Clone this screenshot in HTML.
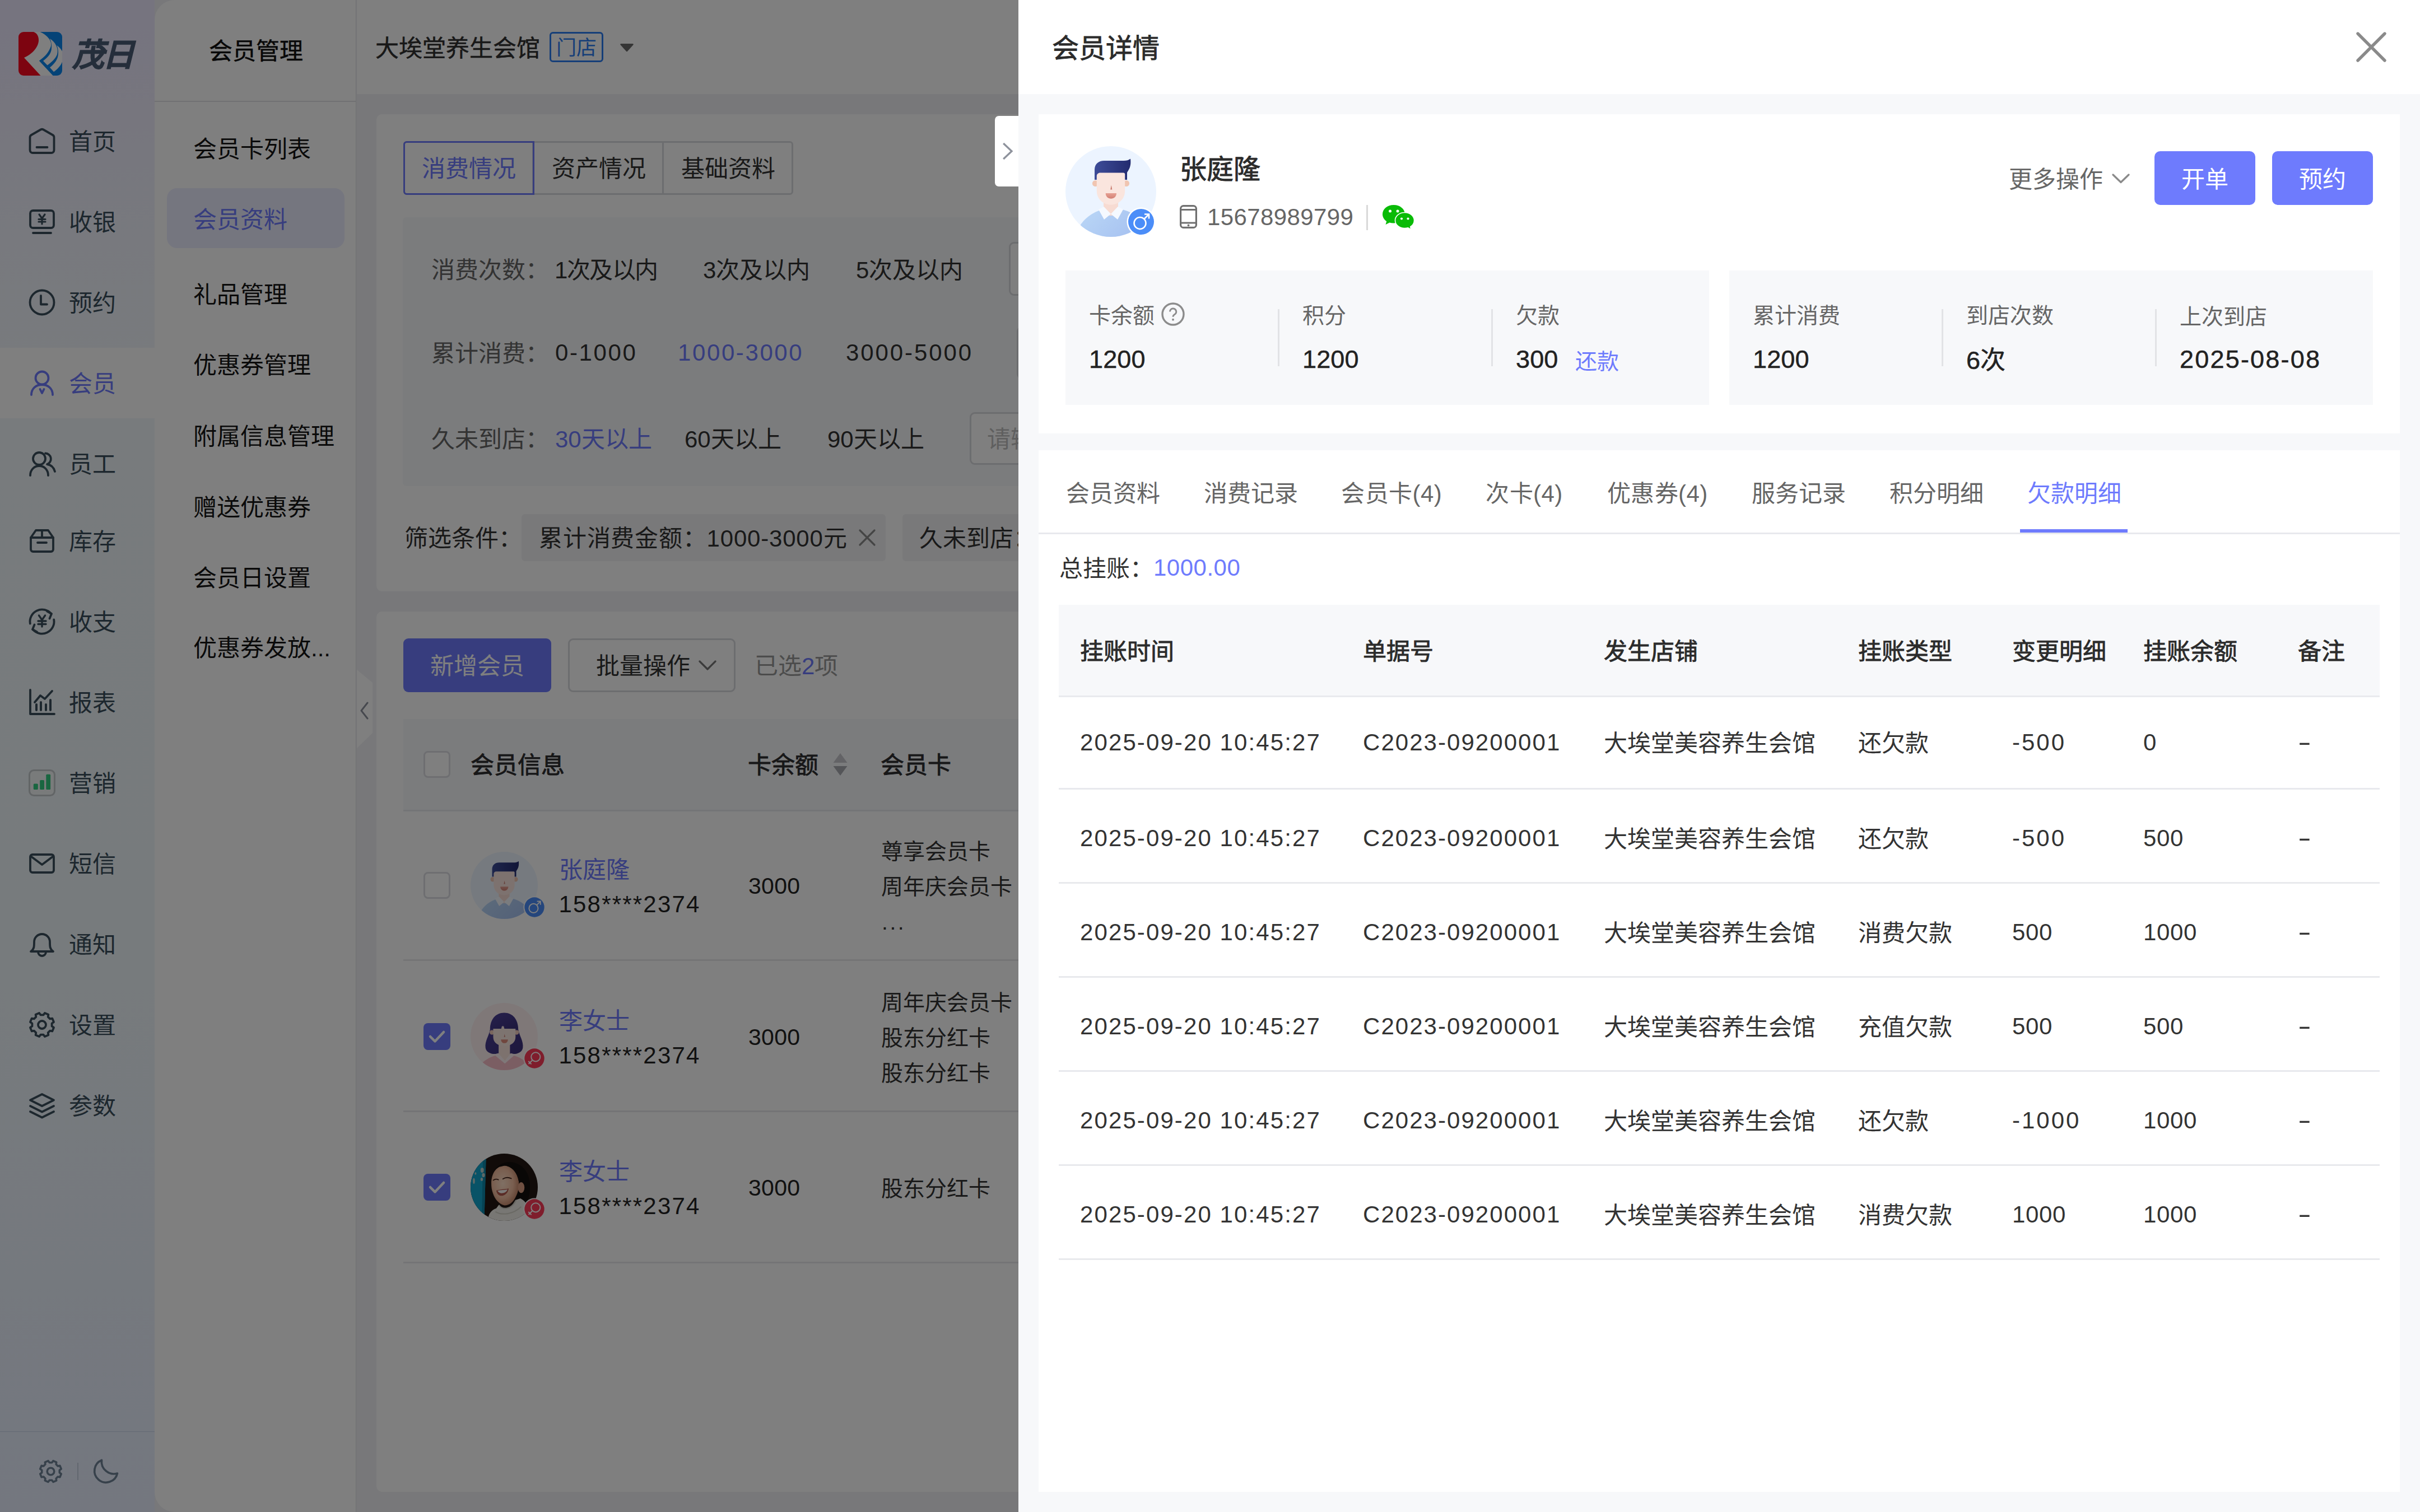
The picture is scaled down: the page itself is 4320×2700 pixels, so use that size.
<!DOCTYPE html>
<html lang="zh-CN"><head><meta charset="utf-8"><title>会员详情</title>
<style>
*{box-sizing:border-box;margin:0;padding:0}
html,body{width:4320px;height:2700px;overflow:hidden;background:#fff}
body{font-family:"Liberation Sans",sans-serif;color:#333;-webkit-font-smoothing:antialiased}
#app{position:relative;width:4320px;height:2700px;overflow:hidden;background:#f0f1f5}
.t{position:absolute;white-space:nowrap}
.b{position:absolute}
.m{-webkit-text-stroke:0.5px currentColor}
.m2{-webkit-text-stroke:0.85px currentColor}
svg{position:absolute;overflow:visible}
.ic{fill:none;stroke:#3a4f5c;stroke-width:3.800;stroke-linecap:round;stroke-linejoin:round}
</style></head>
<body>
<svg width="0" height="0" style="position:absolute"><defs>
<clipPath id="c81"><circle cx="81" cy="81" r="81"/></clipPath>
<linearGradient id="hairm" x1="0" y1="0" x2="1" y2="0"><stop offset="0" stop-color="#3d4c98"/><stop offset="1" stop-color="#232b6f"/></linearGradient>
<linearGradient id="bodym" x1="0" y1="0" x2="1" y2="1"><stop offset="0" stop-color="#bcd9f7"/><stop offset="1" stop-color="#97b1ec"/></linearGradient>
<linearGradient id="mouth" x1="0" y1="0" x2="0" y2="1"><stop offset="0" stop-color="#e6a093"/><stop offset="1" stop-color="#d27f73"/></linearGradient>
<g id="av_m"><g clip-path="url(#c81)">
<rect width="162" height="162" fill="#ecf4ff"/>
<ellipse cx="84" cy="175" rx="68" ry="64" fill="url(#bodym)"/>
<rect x="68" y="92" width="26" height="32" fill="#f7dbd2"/>
<path d="M59 113L68.500 108 81 121 69 131Z" fill="#f5f9ff"/><path d="M103 113L93.500 108 81 121 93 131Z" fill="#f5f9ff"/>
<circle cx="53.500" cy="66.500" r="5.600" fill="#f0c5b1"/><circle cx="108.500" cy="66.500" r="5.600" fill="#f0c5b1"/>
<path d="M55.800 44H106.200V80C106.200 94 95 104.500 81 104.500S55.800 94 55.800 80Z" fill="#fae5de"/>
<path d="M52 60V42C52 32 59 26 69 26H104C109 26 113 25 116 22.500C117 30 116 37 113 42L110 47V60H106.200V50C106.200 48.500 105 47.600 103.500 47.600H62C58.500 47.600 55.800 50 55.800 53.500V60Z" fill="url(#hairm)"/>
<path d="M81.800 69.500L83.300 77.500H80.200Z" fill="#c97d70"/>
<path d="M71.700 84H91C91 90 86.500 93.800 81.300 93.800S71.700 90 71.700 84Z" fill="url(#mouth)"/>
</g></g>
<linearGradient id="hairf" x1="0" y1="0" x2="1" y2="1"><stop offset="0" stop-color="#4d4199"/><stop offset="1" stop-color="#3a2f7a"/></linearGradient>
<g id="av_f"><g clip-path="url(#c81)">
<rect width="162" height="162" fill="#fff0f1"/>
<path d="M47 64C47 40 60 23.500 81 23.500S115 40 115 64C118 80 128 92 126 108C125 116 118 121 108 123H54C44 121 37 116 36 108C34 92 44 80 47 64Z" fill="url(#hairf)"/>
<ellipse cx="82" cy="176" rx="68" ry="52" fill="#f7bcc7"/>
<path d="M67.700 96H95V122L100 127 82 143 64 127 67.700 122Z" fill="#fae4dd"/>
<path d="M56 124L67 121 82.700 139 97 121 108 124 82.700 146Z" fill="#fef1f2"/>
<circle cx="51.500" cy="71" r="5.500" fill="#f3cdbd"/><circle cx="111" cy="71" r="5.500" fill="#f3cdbd"/>
<path d="M54.600 56H108.400V82C108.400 96 96 104 81.500 104S54.600 96 54.600 82Z" fill="#fbe8e1"/>
<path d="M48 62C48 40 62 28 81 28S114 40 114 62L81.500 62 77.700 47.700 74 62Z" fill="url(#hairf)"/>
<path d="M82 75L83.500 82H80.600Z" fill="#c97d70"/>
<path d="M73.400 88H90C90 94 86 97 81.700 97S73.400 94 73.400 88Z" fill="#e08c7c"/>
</g></g>
<radialGradient id="facep" cx="0.42" cy="0.45" r="0.62"><stop offset="0" stop-color="#ffe0c8"/><stop offset="0.6" stop-color="#f3bd9f"/><stop offset="1" stop-color="#c08062"/></radialGradient>
<g id="av_p"><g clip-path="url(#c81)">
<rect width="162" height="162" fill="#221712"/>
<path d="M0 0H37.500L33 162H0Z" fill="#13a6cf"/>
<path d="M30 0H37.500L33 162H27Z" fill="#0c86a8"/>
<g fill="#dcdbd0" opacity=".85"><ellipse cx="28" cy="40" rx="4" ry="6"/><ellipse cx="31" cy="52" rx="3.500" ry="5"/><ellipse cx="27" cy="62" rx="3" ry="4"/><ellipse cx="8" cy="66" rx="2.500" ry="7"/><ellipse cx="12" cy="48" rx="2" ry="3"/></g>
<path d="M52 66C50 36 76 14 106 22C134 30 148 58 142 96C140 112 134 122 126 128L98 104Z" fill="#130e0c"/>
<path d="M50 72C50 50 60 30 82 29C98 30 112 44 116 66C118 80 114 94 110 102C104 116 94 125 82 125C70 123 58 110 54 96C51 88 50 80 50 72Z" fill="url(#facep)"/>
<path d="M82 29C98 30 112 44 116 66L119 70C122 50 110 30 92 24C84 22 76 26 70 32Z" fill="#130e0c"/>
<ellipse cx="122" cy="82" rx="8" ry="13" fill="#dfa084"/>
<path d="M55 64c4-3 8-3 12-1M78 61c6-4 14-4 20-1" stroke="#4a2a20" stroke-width="2.600" fill="none" stroke-linecap="round"/>
<path d="M62 89C70 86 84 86 92 84C90 98 78 104 70 101C66 99 63 95 62 89Z" fill="#b4584c"/>
<path d="M65 89.500C72 88 82 88 89 86.500C87 93 80 96 74 95.500C70 95 67 93 65 89.500Z" fill="#fbf7f2"/>
<path d="M42 162C42 146 50 136 62 132L68 124C76 136 96 136 108 112L120 108C128 112 134 118 136 126L150 162Z" fill="#f0efe9"/>
<path d="M68 124C78 138 100 134 110 112M60 140C76 150 104 146 122 128" stroke="#d5d3c9" stroke-width="3" fill="none"/>
</g></g>
<g id="bd_m"><circle cx="26" cy="26" r="25.500" fill="#fff"/><circle cx="26" cy="26" r="23" fill="#4b8df8"/>
<circle cx="24" cy="28.500" r="10.500" fill="none" stroke="#fff" stroke-width="2.600"/><path d="M31.500 21L40 12.500M32 12.500H40V20.500" fill="none" stroke="#fff" stroke-width="2.600"/></g>
<g id="bd_f"><circle cx="26" cy="26" r="25.500" fill="#fff"/><circle cx="26" cy="26" r="23" fill="#ff3a58"/>
<circle cx="29" cy="22.500" r="10.500" fill="none" stroke="#fff" stroke-width="2.600"/><path d="M21.500 30L12.500 39M12 32.500L19 39.500" fill="none" stroke="#fff" stroke-width="2.600"/></g>
</defs></svg>
<div id="app">
<div class="b" id="side" style="left:0;top:0;width:276px;height:2700px;background:linear-gradient(180deg,#ece8ff 0%,#eeecfd 7%,#f0f3fc 16%,#f0f7fb 28%,#eff7fa 60%,#ebf2fd 85%,#e8efff 100%)"></div>
<div class="b " style="left:0px;top:621px;width:276px;height:126px;background:rgba(255,255,255,.96)"></div>
<svg style="left:33px;top:57px" width="78" height="78" viewBox="0 0 78 78">
<defs><clipPath id="lg"><rect x="0" y="0" width="78" height="78" rx="9" ry="9"/></clipPath></defs>
<g clip-path="url(#lg)">
<rect width="78" height="78" fill="#ffffff"/>
<path d="M0 0H27C33 2 36.5 8 36 16C35 28 24 40 10 46L39.5 78H0Z" fill="#fa0820"/>
<path d="M38.5 0H78V78H61.5L36.8 51.5C48 44 55 35 58 25C60 15 50 5 38.5 0Z" fill="#0b86ee"/>
<path d="M56 12C66 18 72 30 69 40C66 48 59 54 51.5 59.5L44 51.7C52 46 57 40 58.5 33C60 26 59 18 56 12Z" fill="#ffffff"/>
<path d="M68.5 24C73 27 76 31 78.5 35.5V52C76 60 70 66 63 71.2L56 63.5C63 58 68 52 70 45C72 38 71 30 68.5 24Z" fill="#ffffff"/>
</g></svg>
<div class="t " style="left:129px;top:70.2px;font-size:57px;line-height:57px;color:#4a5c76;font-weight:bold;font-style:italic;letter-spacing:-3px;-webkit-text-stroke:1.2px currentColor">茂日</div>
<svg class="ic" style="left:51px;top:228px;stroke:#3a4f5c" width="48" height="48" viewBox="0 0 48 48"><path d="M21.500 3.500a5 5 0 0 1 5 0L43 13a5 5 0 0 1 2.500 4.300V40a5 5 0 0 1-5 5H7.500a5 5 0 0 1-5-5V17.300A5 5 0 0 1 5 13Z"/><path d="M14.500 35H33.500"/></svg>
<div class="t " style="left:123px;top:233.0px;font-size:42px;line-height:42px;color:#3a4f5c;">首页</div>
<svg class="ic" style="left:51px;top:372px;stroke:#3a4f5c" width="48" height="48" viewBox="0 0 48 48"><rect x="3" y="4" width="42" height="31" rx="5"/><path d="M8 44H40"/><path d="M19 11l5 7 5-7M24 18v10M18 19.5h12M18 24h12" stroke-width="3.2"/></svg>
<div class="t " style="left:123px;top:377.0px;font-size:42px;line-height:42px;color:#3a4f5c;">收银</div>
<svg class="ic" style="left:51px;top:516px;stroke:#3a4f5c" width="48" height="48" viewBox="0 0 48 48"><circle cx="24" cy="24" r="21.500"/><path d="M22 12V27.500H33"/></svg>
<div class="t " style="left:123px;top:521.0px;font-size:42px;line-height:42px;color:#3a4f5c;">预约</div>
<svg class="ic" style="left:51px;top:660px;stroke:#6e7bfd" width="48" height="48" viewBox="0 0 48 48"><circle cx="24" cy="15" r="11.5"/><path d="M5 45c0-11 8-18 19-18s19 7 19 18"/><path d="M20.5 35l3.5 7 3.5-7"/></svg>
<div class="t " style="left:123px;top:665.0px;font-size:42px;line-height:42px;color:#6e7bfd;">会员</div>
<svg class="ic" style="left:51px;top:804px;stroke:#3a4f5c" width="48" height="48" viewBox="0 0 48 48"><circle cx="19" cy="15" r="11"/><path d="M3 45c0-10 7-17 16-17s16 7 16 17"/><path d="M30 5.5a10 10 0 0 1 3 19.5c7 1 12 6 14 13"/></svg>
<div class="t " style="left:123px;top:809.0px;font-size:42px;line-height:42px;color:#3a4f5c;">员工</div>
<svg class="ic" style="left:51px;top:942px;stroke:#3a4f5c" width="48" height="48" viewBox="0 0 48 48"><path d="M4 18L13 5H35L44 18V39a4 4 0 0 1-4 4H8a4 4 0 0 1-4-4Z"/><path d="M4 18H44M24 5V18M16 27H32"/></svg>
<div class="t " style="left:123px;top:947.0px;font-size:42px;line-height:42px;color:#3a4f5c;">库存</div>
<svg class="ic" style="left:51px;top:1086px;stroke:#3a4f5c" width="48" height="48" viewBox="0 0 48 48"><path d="M2.800 27.700A21.500 21.500 0 0 1 40.500 10.200"/><path d="M45.200 20.300A21.500 21.500 0 0 1 7.500 37.800"/><path d="M33 5.500l8 4.500-3.500 8.500"/><path d="M15 42.500l-8-4.500 3.500-8.500"/><path d="M18.500 13l5.500 8 5.500-8M24 21v12M17 23h14M17 28.500h14" stroke-width="3.4"/></svg>
<div class="t " style="left:123px;top:1091.0px;font-size:42px;line-height:42px;color:#3a4f5c;">收支</div>
<svg class="ic" style="left:51px;top:1230px;stroke:#3a4f5c" width="48" height="48" viewBox="0 0 48 48"><path d="M3 2V45H46"/><path d="M11 24l10-12 8 6 13-14"/><path d="M14 28v10M22 24v14M31 28v10M39 20v18" stroke-width="4"/></svg>
<div class="t " style="left:123px;top:1235.0px;font-size:42px;line-height:42px;color:#3a4f5c;">报表</div>
<svg style="left:51px;top:1374px" width="48" height="48" viewBox="0 0 48 48"><rect x="1.500" y="1.500" width="45" height="45" rx="8" fill="#f3f6f7" stroke="#c4cacd" stroke-width="3"/><rect x="8.800" y="25.400" width="8" height="10.600" rx="1.500" fill="#32cc80"/><rect x="20.200" y="19" width="7.800" height="17" rx="1.500" fill="#32cc80"/><rect x="31.300" y="8.800" width="7.800" height="27.200" rx="1.500" fill="#32cc80"/></svg>
<div class="t " style="left:123px;top:1379.0px;font-size:42px;line-height:42px;color:#3a4f5c;">营销</div>
<svg class="ic" style="left:51px;top:1518px;stroke:#3a4f5c" width="48" height="48" viewBox="0 0 48 48"><rect x="3" y="8" width="42" height="32" rx="4"/><path d="M4 11l20 15 20-15"/></svg>
<div class="t " style="left:123px;top:1523.0px;font-size:42px;line-height:42px;color:#3a4f5c;">短信</div>
<svg class="ic" style="left:51px;top:1662px;stroke:#3a4f5c" width="48" height="48" viewBox="0 0 48 48"><path d="M4 37c6-4 6-9 6-17a14 14 0 0 1 28 0c0 8 0 13 6 17Z"/><path d="M17 38a7 7 0 0 0 14 0"/></svg>
<div class="t " style="left:123px;top:1667.0px;font-size:42px;line-height:42px;color:#3a4f5c;">通知</div>
<svg class="ic" style="left:51px;top:1806px;stroke:#3a4f5c" width="48" height="48" viewBox="0 0 48 48"><circle cx="24" cy="24" r="7"/><path d="M26.5 6.4L28.9 3.0L35.4 5.7L34.7 9.8L38.2 13.3L42.3 12.6L45.0 19.1L41.6 21.5L41.6 26.5L45.0 28.9L42.3 35.4L38.2 34.7L34.7 38.2L35.4 42.3L28.9 45.0L26.5 41.6L21.5 41.6L19.1 45.0L12.6 42.3L13.3 38.2L9.8 34.7L5.7 35.4L3.0 28.9L6.4 26.5L6.4 21.5L3.0 19.1L5.7 12.6L9.8 13.3L13.3 9.8L12.6 5.7L19.1 3.0L21.5 6.4Z"/></svg>
<div class="t " style="left:123px;top:1811.0px;font-size:42px;line-height:42px;color:#3a4f5c;">设置</div>
<svg class="ic" style="left:51px;top:1950px;stroke:#3a4f5c" width="48" height="48" viewBox="0 0 48 48"><path d="M24 4L45 14.500 24 25 3 14.500Z"/><path d="M3 25l21 10.500L45 25"/><path d="M3 35l21 10.500L45 35"/></svg>
<div class="t " style="left:123px;top:1955.0px;font-size:42px;line-height:42px;color:#3a4f5c;">参数</div>
<div class="b " style="left:0px;top:2555.5px;width:276px;height:1.5px;background:#c9d3e6"></div>
<svg class="ic" style="left:68.500px;top:2605.500px;stroke:#6f8396;stroke-width:4" width="43" height="43" viewBox="0 0 48 48"><circle cx="24" cy="24" r="7"/><path d="M26.5 6.4L28.9 3.0L35.4 5.7L34.7 9.8L38.2 13.3L42.3 12.6L45.0 19.1L41.6 21.5L41.6 26.5L45.0 28.9L42.3 35.4L38.2 34.7L34.7 38.2L35.4 42.3L28.9 45.0L26.5 41.6L21.5 41.6L19.1 45.0L12.6 42.3L13.3 38.2L9.8 34.7L5.7 35.4L3.0 28.9L6.4 26.5L6.4 21.5L3.0 19.1L5.7 12.6L9.8 13.3L13.3 9.8L12.6 5.7L19.1 3.0L21.5 6.4Z"/></svg>
<div class="b " style="left:138px;top:2612px;width:1.5px;height:31px;background:#c4cede"></div>
<svg class="ic" style="left:167px;top:2605px;stroke:#6f8396;stroke-width:4" width="44" height="44" viewBox="0 0 48 48"><path d="M15.800 2.700A24 24 0 0 0 46.300 28.400 22.500 22.500 0 1 1 15.800 2.700Z"/></svg>
<div class="b " style="left:276px;top:0px;width:4044px;height:2700px;background:#f0f1f5;border-radius:36px 0 0 36px;overflow:hidden"></div>
<div class="b " style="left:276px;top:0px;width:360px;height:2700px;background:#fff;border-radius:36px 0 0 36px"></div>
<div class="b " style="left:635px;top:0px;width:1.2px;height:2700px;background:#dfe0e3"></div>
<div class="b " style="left:276px;top:180px;width:359px;height:2px;background:#e2e3e6"></div>
<div class="t m" style="left:277px;top:70.7px;font-size:42px;line-height:42px;color:#111;width:359px;text-align:center;">会员管理</div>
<div class="b " style="left:298px;top:336px;width:317px;height:107px;background:#ebecff;border-radius:18px"></div>
<div class="t " style="left:345px;top:246.0px;font-size:42px;line-height:42px;color:#141414;">会员卡列表</div>
<div class="t " style="left:345px;top:371.5px;font-size:42px;line-height:42px;color:#6e7bfd;">会员资料</div>
<div class="t " style="left:345px;top:506.0px;font-size:42px;line-height:42px;color:#141414;">礼品管理</div>
<div class="t " style="left:345px;top:632.0px;font-size:42px;line-height:42px;color:#141414;">优惠券管理</div>
<div class="t " style="left:345px;top:759.0px;font-size:42px;line-height:42px;color:#141414;">附属信息管理</div>
<div class="t " style="left:345px;top:885.5px;font-size:42px;line-height:42px;color:#141414;">赠送优惠券</div>
<div class="t " style="left:345px;top:1011.5px;font-size:42px;line-height:42px;color:#141414;">会员日设置</div>
<div class="t " style="left:345px;top:1137.0px;font-size:42px;line-height:42px;color:#141414;">优惠券发放...</div>
<svg style="left:637px;top:1196px" width="30" height="140" viewBox="0 0 30 140"><path d="M0 0L28 23V113L0 140Z" fill="#fff"/><path d="M19 59L8 73 19 87" fill="none" stroke="#8c919c" stroke-width="3" stroke-linecap="round" stroke-linejoin="round"/></svg>
<div class="b " style="left:637px;top:0px;width:3683px;height:168px;background:#fff"></div>
<div class="t m" style="left:670px;top:66.0px;font-size:42px;line-height:42px;color:#303030;">大埃堂养生会馆</div>
<div class="b " style="left:981px;top:57px;width:96px;height:54px;border:3px solid #2b7cf0;border-radius:6px"></div>
<div class="t " style="left:981px;top:67.7px;font-size:36px;line-height:36px;color:#2b7cf0;width:96px;text-align:center;">门店</div>
<svg style="left:1107px;top:78px" width="24" height="14.500" viewBox="0 0 26 16"><path d="M1.500 0H24.500a1.500 1.500 0 0 1 1 2.600L14 15.300a1.500 1.500 0 0 1-2 0L.5 2.600A1.500 1.500 0 0 1 1.500 0Z" fill="#6a6a6a"/></svg>
<div class="b " style="left:672px;top:204px;width:3700px;height:852px;background:#fff;border-radius:10px"></div>
<div class="b " style="left:720px;top:252px;width:696px;height:96px;border:3px solid #d9dadf;border-radius:6px"></div>
<div class="b " style="left:950px;top:252px;width:3px;height:96px;background:#d9dadf"></div>
<div class="b " style="left:1182px;top:252px;width:3px;height:96px;background:#d9dadf"></div>
<div class="b " style="left:720px;top:252px;width:234px;height:96px;border:3px solid #6e7bfd;border-radius:6px 0 0 6px"></div>
<div class="t " style="left:720px;top:281.0px;font-size:42px;line-height:42px;color:#6e7bfd;width:234px;text-align:center;">消费情况</div>
<div class="t " style="left:953px;top:281.0px;font-size:42px;line-height:42px;color:#333;width:231px;text-align:center;">资产情况</div>
<div class="t " style="left:1184px;top:281.0px;font-size:42px;line-height:42px;color:#333;width:231px;text-align:center;">基础资料</div>
<div class="b " style="left:719px;top:388px;width:3600px;height:480px;background:#f7f8fa;border-radius:6px"></div>
<div class="t " style="left:770px;top:462.0px;font-size:42px;line-height:42px;color:#666;">消费次数：</div>
<div class="t " style="left:990px;top:462.0px;font-size:42px;line-height:42px;color:#333;letter-spacing:-1.500px">1次及以内</div>
<div class="t " style="left:1255px;top:462.0px;font-size:42px;line-height:42px;color:#333;">3次及以内</div>
<div class="t " style="left:1528px;top:462.0px;font-size:42px;line-height:42px;color:#333;">5次及以内</div>
<div class="b " style="left:1801px;top:432px;width:400px;height:96px;border:3px solid #d9dadf;border-radius:9px;background:#fff"></div>
<div class="t " style="left:770px;top:611.0px;font-size:42px;line-height:42px;color:#666;">累计消费：</div>
<div class="t " style="left:991px;top:609.0px;font-size:42px;line-height:42px;color:#333;letter-spacing:2.600px">0-1000</div>
<div class="t " style="left:1210px;top:609.0px;font-size:42px;line-height:42px;color:#6e7bfd;letter-spacing:2.600px">1000-3000</div>
<div class="t " style="left:1510px;top:609.0px;font-size:42px;line-height:42px;color:#333;letter-spacing:2.900px">3000-5000</div>
<div class="b " style="left:1815px;top:583px;width:400px;height:94px;border:3px solid #d9dadf;border-radius:9px;background:#fff"></div>
<div class="t " style="left:770px;top:764.0px;font-size:42px;line-height:42px;color:#666;">久未到店：</div>
<div class="t " style="left:991px;top:764.0px;font-size:42px;line-height:42px;color:#6e7bfd;">30天以上</div>
<div class="t " style="left:1222px;top:764.0px;font-size:42px;line-height:42px;color:#333;">60天以上</div>
<div class="t " style="left:1477px;top:764.0px;font-size:42px;line-height:42px;color:#333;">90天以上</div>
<div class="b " style="left:1731px;top:736px;width:500px;height:94px;border:3px solid #d9dadf;border-radius:9px;background:#fff"></div>
<div class="t " style="left:1762px;top:764.0px;font-size:42px;line-height:42px;color:#bfbfbf;">请输入</div>
<div class="t " style="left:722px;top:941.0px;font-size:42px;line-height:42px;color:#333;">筛选条件：</div>
<div class="b " style="left:931px;top:918px;width:650px;height:84px;background:#f2f3f5;border-radius:6px"></div>
<div class="t " style="left:962px;top:941.0px;font-size:42px;line-height:42px;color:#333;letter-spacing:.8px">累计消费金额：1000-3000元</div>
<svg style="left:1533px;top:945px" width="30" height="30" viewBox="0 0 30 30"><path d="M2 2L28 28M28 2L2 28" stroke="#8a8a8a" stroke-width="3.300" stroke-linecap="round"/></svg>
<div class="b " style="left:1611px;top:918px;width:600px;height:84px;background:#f2f3f5;border-radius:6px"></div>
<div class="t " style="left:1641px;top:941.0px;font-size:42px;line-height:42px;color:#333;">久未到店：30天以上</div>
<div class="b " style="left:672px;top:1092px;width:3700px;height:1572px;background:#fff;border-radius:10px"></div>
<div class="b " style="left:720px;top:1140px;width:264px;height:96px;background:#6e7bfd;border-radius:9px"></div>
<div class="t " style="left:720px;top:1169.0px;font-size:42px;line-height:42px;color:#fff;width:264px;text-align:center;">新增会员</div>
<div class="b " style="left:1014px;top:1140px;width:299px;height:96px;border:3px solid #d9dadf;border-radius:9px"></div>
<div class="t " style="left:1064px;top:1169.0px;font-size:42px;line-height:42px;color:#333;">批量操作</div>
<svg style="left:1247px;top:1178px" width="32" height="20" viewBox="0 0 32 20"><path d="M2 3L16 17 30 3" fill="none" stroke="#777" stroke-width="3.300" stroke-linecap="round" stroke-linejoin="round"/></svg>
<div class="t " style="left:1347px;top:1169.0px;font-size:42px;line-height:42px;color:#999;">已选<span style="color:#6e7bfd">2</span>项</div>
<div class="b " style="left:720px;top:1284px;width:3600px;height:165px;background:#f7f8fa;border-bottom:3px solid #e9eaee"></div>
<div class="b " style="left:756px;top:1341px;width:48px;height:48px;border:3px solid #dcdde3;border-radius:8px;background:#fff"></div>
<div class="t m2" style="left:840px;top:1346.0px;font-size:42px;line-height:42px;color:#2e2e30;">会员信息</div>
<div class="t m2" style="left:1335px;top:1346.0px;font-size:42px;line-height:42px;color:#2e2e30;">卡余额</div>
<svg style="left:1487px;top:1345px" width="26" height="40" viewBox="0 0 26 40"><path d="M13 0L25.500 17H.5Z" fill="#c6c7cc"/><path d="M13 40L25.500 23H.5Z" fill="#a8aab0"/></svg>
<div class="t m2" style="left:1572px;top:1346.0px;font-size:42px;line-height:42px;color:#2e2e30;">会员卡</div>
<div class="b " style="left:756px;top:1557px;width:48px;height:48px;border:3px solid #dcdde3;border-radius:8px;background:#fff"></div>
<svg style="left:840px;top:1521px" width="120" height="120" viewBox="0 0 162 162"><use href="#av_m"/></svg>
<svg style="left:934px;top:1600px" width="40" height="40" viewBox="0 0 52 52"><use href="#bd_m"/></svg>
<div class="t " style="left:998px;top:1533.0px;font-size:42px;line-height:42px;color:#6e7bfd;">张庭隆</div>
<div class="t " style="left:997.5px;top:1594.0px;font-size:42px;line-height:42px;color:#222;letter-spacing:2.200px">158****2374</div>
<div class="t " style="left:1336px;top:1562.0px;font-size:41px;line-height:41px;color:#222;letter-spacing:.3px">3000</div>
<div class="t " style="left:1573px;top:1501.4px;font-size:39px;line-height:39px;color:#333;">尊享会员卡</div>
<div class="t " style="left:1573px;top:1564.4px;font-size:39px;line-height:39px;color:#333;">周年庆会员卡</div>
<div class="t " style="left:1574px;top:1626.5px;font-size:39px;line-height:39px;color:#333;letter-spacing:3.600px">...</div>
<div class="b " style="left:720px;top:1713px;width:3600px;height:3px;background:#e8e9ed"></div>
<div class="b " style="left:756px;top:1827px;width:48px;height:48px;background:#6e7bfd;border-radius:8px"><svg style="left:9px;top:12px" width="30" height="24" viewBox="0 0 30 24"><path d="M3 12L11.500 20.500 27 4" fill="none" stroke="#fff" stroke-width="4.500" stroke-linecap="round" stroke-linejoin="round"/></svg></div>
<svg style="left:840px;top:1791px" width="120" height="120" viewBox="0 0 162 162"><use href="#av_f"/></svg>
<svg style="left:934px;top:1870px" width="40" height="40" viewBox="0 0 52 52"><use href="#bd_f"/></svg>
<div class="t " style="left:998px;top:1803.0px;font-size:42px;line-height:42px;color:#6e7bfd;">李女士</div>
<div class="t " style="left:997.5px;top:1864.0px;font-size:42px;line-height:42px;color:#222;letter-spacing:2.200px">158****2374</div>
<div class="t " style="left:1336px;top:1832.0px;font-size:41px;line-height:41px;color:#222;letter-spacing:.3px">3000</div>
<div class="t " style="left:1573px;top:1771.4px;font-size:39px;line-height:39px;color:#333;">周年庆会员卡</div>
<div class="t " style="left:1573px;top:1834.4px;font-size:39px;line-height:39px;color:#333;">股东分红卡</div>
<div class="t " style="left:1573px;top:1897.4px;font-size:39px;line-height:39px;color:#333;">股东分红卡</div>
<div class="b " style="left:720px;top:1983px;width:3600px;height:3px;background:#e8e9ed"></div>
<div class="b " style="left:756px;top:2096px;width:48px;height:48px;background:#6e7bfd;border-radius:8px"><svg style="left:9px;top:12px" width="30" height="24" viewBox="0 0 30 24"><path d="M3 12L11.500 20.500 27 4" fill="none" stroke="#fff" stroke-width="4.500" stroke-linecap="round" stroke-linejoin="round"/></svg></div>
<svg style="left:840px;top:2060px" width="120" height="120" viewBox="0 0 162 162"><use href="#av_p"/></svg>
<svg style="left:934px;top:2139px" width="40" height="40" viewBox="0 0 52 52"><use href="#bd_f"/></svg>
<div class="t " style="left:998px;top:2072.0px;font-size:42px;line-height:42px;color:#6e7bfd;">李女士</div>
<div class="t " style="left:997.5px;top:2133.0px;font-size:42px;line-height:42px;color:#222;letter-spacing:2.200px">158****2374</div>
<div class="t " style="left:1336px;top:2101.0px;font-size:41px;line-height:41px;color:#222;letter-spacing:.3px">3000</div>
<div class="t " style="left:1573px;top:2103.4px;font-size:39px;line-height:39px;color:#333;">股东分红卡</div>
<div class="b " style="left:720px;top:2253px;width:3600px;height:3px;background:#e8e9ed"></div>
<div class="b" style="left:0;top:0;width:4320px;height:2700px;background:rgba(0,0,0,.5)"></div>
<div class="b " style="left:1776px;top:207px;width:46px;height:126px;background:#fff;border-radius:7px 0 0 7px"></div>
<svg style="left:1789px;top:254px" width="20" height="32" viewBox="0 0 20 32"><path d="M2.200 2L17 16 2.200 30" fill="none" stroke="#8e929c" stroke-width="3.300" stroke-linecap="butt" stroke-linejoin="miter"/></svg>
<div class="b " style="left:1818px;top:0px;width:2502px;height:2700px;background:#f7f8fa"></div>
<div class="b " style="left:1818px;top:0px;width:2502px;height:168px;background:#fff"></div>
<div class="t m2" style="left:1878px;top:63.3px;font-size:48px;line-height:48px;color:#2b2b2b;">会员详情</div>
<svg style="left:4206px;top:57px" width="54" height="54" viewBox="0 0 54 54"><path d="M3 3L51 51M51 3L3 51" stroke="#8a8a8a" stroke-width="5.400" stroke-linecap="round"/></svg>
<div class="b " style="left:1854px;top:204px;width:2430px;height:570px;background:#fff"></div>
<svg style="left:1902px;top:261px" width="162" height="162" viewBox="0 0 162 162"><use href="#av_m"/></svg>
<svg style="left:2011px;top:370px" width="52" height="52" viewBox="0 0 52 52"><use href="#bd_m"/></svg>
<div class="t m2" style="left:2106px;top:279.3px;font-size:48px;line-height:48px;color:#2b2b2b;">张庭隆</div>
<svg style="left:2106px;top:366px" width="31" height="42" viewBox="0 0 31 42"><rect x="1.600" y="1.600" width="27.800" height="38.800" rx="5" fill="none" stroke="#707070" stroke-width="3.200"/><path d="M2 8.500H29M2 32H29" stroke="#707070" stroke-width="2.800"/><circle cx="15.500" cy="36.300" r="1.900" fill="#707070"/></svg>
<div class="t " style="left:2155px;top:367.0px;font-size:42px;line-height:42px;color:#666;letter-spacing:.4px">15678989799</div>
<div class="b " style="left:2439px;top:366px;width:3px;height:45px;background:#d9d9d9"></div>
<svg style="left:2467px;top:364px" width="58" height="48" viewBox="0 0 58 48">
<path d="M21 2C9.500 2 1 9.300 1 18.500c0 5.200 2.800 9.700 7.200 12.700L6.500 37l7-3.600c2.300.7 4.800 1 7.500 1C32.500 34.400 41 27.400 41 18.500S32.500 2 21 2Z" fill="#09bb07"/>
<path d="M40.500 15.500c-9.500 0-17 6.200-17 14s7.500 14 17 14c2 0 4-.3 5.800-.8L52 46l-1.300-5c4-2.600 6.800-6.700 6.800-11.500 0-7.800-7.500-14-17-14Z" fill="#09bb07" stroke="#fff" stroke-width="1.600"/>
<circle cx="14.500" cy="13" r="2.500" fill="#fff"/><circle cx="28" cy="13" r="2.500" fill="#fff"/><circle cx="35" cy="26.500" r="2.100" fill="#fff"/><circle cx="46.500" cy="26.500" r="2.100" fill="#fff"/></svg>
<div class="t " style="left:3586px;top:300.0px;font-size:42px;line-height:42px;color:#666;">更多操作</div>
<svg style="left:3770px;top:309px" width="32" height="20" viewBox="0 0 32 20"><path d="M2 3L16 16.500 30 3" fill="none" stroke="#8a8a8a" stroke-width="3.300" stroke-linecap="round" stroke-linejoin="round"/></svg>
<div class="b " style="left:3846px;top:270px;width:180px;height:96px;background:#6e7bfd;border-radius:10px"></div>
<div class="t " style="left:3846px;top:300.0px;font-size:42px;line-height:42px;color:#fff;width:180px;text-align:center;">开单</div>
<div class="b " style="left:4056px;top:270px;width:180px;height:96px;background:#6e7bfd;border-radius:10px"></div>
<div class="t " style="left:4056px;top:300.0px;font-size:42px;line-height:42px;color:#fff;width:180px;text-align:center;">预约</div>
<div class="b " style="left:1902px;top:483px;width:1149px;height:240px;background:#f7f8fa"></div>
<div class="t " style="left:1944px;top:544.4px;font-size:39px;line-height:39px;color:#666;">卡余额</div>
<div class="t m" style="left:1944px;top:618.5px;font-size:45px;line-height:45px;color:#222;letter-spacing:.1px">1200</div>
<div class="t " style="left:2325px;top:544.4px;font-size:39px;line-height:39px;color:#666;">积分</div>
<div class="t m" style="left:2325px;top:618.5px;font-size:45px;line-height:45px;color:#222;letter-spacing:.1px">1200</div>
<div class="b " style="left:2281px;top:552px;width:3px;height:102px;background:#e2e3e6"></div>
<div class="t " style="left:2706px;top:544.4px;font-size:39px;line-height:39px;color:#666;">欠款</div>
<div class="t m" style="left:2706px;top:618.5px;font-size:45px;line-height:45px;color:#222;letter-spacing:.1px">300</div>
<div class="b " style="left:2662px;top:552px;width:3px;height:102px;background:#e2e3e6"></div>
<div class="b " style="left:3087px;top:483px;width:1149px;height:240px;background:#f7f8fa"></div>
<div class="t " style="left:3129px;top:544.4px;font-size:39px;line-height:39px;color:#666;">累计消费</div>
<div class="t m" style="left:3129px;top:618.5px;font-size:45px;line-height:45px;color:#222;letter-spacing:.1px">1200</div>
<div class="t " style="left:3510px;top:544.4px;font-size:39px;line-height:39px;color:#666;">到店次数</div>
<div class="t m" style="left:3510px;top:620.7px;font-size:45px;line-height:45px;color:#222;letter-spacing:.1px">6次</div>
<div class="b " style="left:3466px;top:552px;width:3px;height:102px;background:#e2e3e6"></div>
<div class="t " style="left:3891px;top:546.4px;font-size:39px;line-height:39px;color:#666;">上次到店</div>
<div class="t m" style="left:3891px;top:618.5px;font-size:45px;line-height:45px;color:#222;letter-spacing:2.200px">2025-08-08</div>
<div class="b " style="left:3847px;top:552px;width:3px;height:102px;background:#e2e3e6"></div>
<svg style="left:2073px;top:540px" width="42" height="42" viewBox="0 0 42 42"><circle cx="21" cy="21" r="19" fill="none" stroke="#8c8c8c" stroke-width="3.400"/><path d="M15.500 16.500a5.600 5.600 0 1 1 8.300 5c-1.900 1.100-2.800 2-2.800 4.300" fill="none" stroke="#8c8c8c" stroke-width="3"/><circle cx="21" cy="30.800" r="2" fill="#8c8c8c"/></svg>
<div class="t " style="left:2812px;top:626.4px;font-size:39px;line-height:39px;color:#6e7bfd;">还款</div>
<div class="b " style="left:1854px;top:804px;width:2430px;height:1860px;background:#fff"></div>
<div class="b " style="left:1854px;top:951px;width:2430px;height:3px;background:#e8e9ed"></div>
<div class="t " style="left:1903px;top:861.0px;font-size:42px;line-height:42px;color:#666;">会员资料</div>
<div class="t " style="left:2149px;top:861.0px;font-size:42px;line-height:42px;color:#666;">消费记录</div>
<div class="t " style="left:2394px;top:861.0px;font-size:42px;line-height:42px;color:#666;letter-spacing:.5px">会员卡(4)</div>
<div class="t " style="left:2652px;top:861.0px;font-size:42px;line-height:42px;color:#666;letter-spacing:.5px">次卡(4)</div>
<div class="t " style="left:2868.5px;top:861.0px;font-size:42px;line-height:42px;color:#666;letter-spacing:.5px">优惠券(4)</div>
<div class="t " style="left:3127px;top:861.0px;font-size:42px;line-height:42px;color:#666;">服务记录</div>
<div class="t " style="left:3373px;top:861.0px;font-size:42px;line-height:42px;color:#666;">积分明细</div>
<div class="t " style="left:3618.5px;top:861.0px;font-size:42px;line-height:42px;color:#6e7bfd;">欠款明细</div>
<div class="b " style="left:3606px;top:945px;width:192px;height:6px;background:#6e7bfd"></div>
<div class="t " style="left:1891px;top:995.0px;font-size:42px;line-height:42px;color:#333;">总挂账：</div>
<div class="t " style="left:2059px;top:993.0px;font-size:42px;line-height:42px;color:#6e7bfd;letter-spacing:.5px">1000.00</div>
<div class="b " style="left:1890px;top:1080px;width:2358px;height:165px;background:#f7f8fa;border-bottom:3px solid #e9eaee"></div>
<div class="t m2" style="left:1928px;top:1143.0px;font-size:42px;line-height:42px;color:#2b2b2b;">挂账时间</div>
<div class="t m2" style="left:2433px;top:1143.0px;font-size:42px;line-height:42px;color:#2b2b2b;">单据号</div>
<div class="t m2" style="left:2863px;top:1143.0px;font-size:42px;line-height:42px;color:#2b2b2b;">发生店铺</div>
<div class="t m2" style="left:3317px;top:1143.0px;font-size:42px;line-height:42px;color:#2b2b2b;">挂账类型</div>
<div class="t m2" style="left:3592px;top:1143.0px;font-size:42px;line-height:42px;color:#2b2b2b;">变更明细</div>
<div class="t m2" style="left:3826px;top:1143.0px;font-size:42px;line-height:42px;color:#2b2b2b;">挂账余额</div>
<div class="t m2" style="left:4102px;top:1143.0px;font-size:42px;line-height:42px;color:#2b2b2b;">备注</div>
<div class="t " style="left:1928px;top:1305.0px;font-size:42px;line-height:42px;color:#333;letter-spacing:2.100px">2025-09-20 10:45:27</div>
<div class="t " style="left:2433px;top:1305.0px;font-size:42px;line-height:42px;color:#333;letter-spacing:2.050px">C2023-09200001</div>
<div class="t " style="left:2863px;top:1307.0px;font-size:42px;line-height:42px;color:#333;">大埃堂美容养生会馆</div>
<div class="t " style="left:3317px;top:1307.0px;font-size:42px;line-height:42px;color:#333;">还欠款</div>
<div class="t " style="left:3592px;top:1305.0px;font-size:42px;line-height:42px;color:#333;letter-spacing:3px">-500</div>
<div class="t " style="left:3826px;top:1305.0px;font-size:42px;line-height:42px;color:#333;letter-spacing:.6px">0</div>
<div class="t " style="left:4102px;top:1305.0px;font-size:42px;line-height:42px;color:#333;"><span style="display:inline-block;transform:scaleX(1.700);transform-origin:0 50%">-</span></div>
<div class="b " style="left:1890px;top:1407px;width:2358px;height:3px;background:#e8e9ed"></div>
<div class="t " style="left:1928px;top:1476.0px;font-size:42px;line-height:42px;color:#333;letter-spacing:2.100px">2025-09-20 10:45:27</div>
<div class="t " style="left:2433px;top:1476.0px;font-size:42px;line-height:42px;color:#333;letter-spacing:2.050px">C2023-09200001</div>
<div class="t " style="left:2863px;top:1478.0px;font-size:42px;line-height:42px;color:#333;">大埃堂美容养生会馆</div>
<div class="t " style="left:3317px;top:1478.0px;font-size:42px;line-height:42px;color:#333;">还欠款</div>
<div class="t " style="left:3592px;top:1476.0px;font-size:42px;line-height:42px;color:#333;letter-spacing:3px">-500</div>
<div class="t " style="left:3826px;top:1476.0px;font-size:42px;line-height:42px;color:#333;letter-spacing:.6px">500</div>
<div class="t " style="left:4102px;top:1476.0px;font-size:42px;line-height:42px;color:#333;"><span style="display:inline-block;transform:scaleX(1.700);transform-origin:0 50%">-</span></div>
<div class="b " style="left:1890px;top:1575px;width:2358px;height:3px;background:#e8e9ed"></div>
<div class="t " style="left:1928px;top:1644.0px;font-size:42px;line-height:42px;color:#333;letter-spacing:2.100px">2025-09-20 10:45:27</div>
<div class="t " style="left:2433px;top:1644.0px;font-size:42px;line-height:42px;color:#333;letter-spacing:2.050px">C2023-09200001</div>
<div class="t " style="left:2863px;top:1646.0px;font-size:42px;line-height:42px;color:#333;">大埃堂美容养生会馆</div>
<div class="t " style="left:3317px;top:1646.0px;font-size:42px;line-height:42px;color:#333;">消费欠款</div>
<div class="t " style="left:3592px;top:1644.0px;font-size:42px;line-height:42px;color:#333;letter-spacing:.6px">500</div>
<div class="t " style="left:3826px;top:1644.0px;font-size:42px;line-height:42px;color:#333;letter-spacing:.6px">1000</div>
<div class="t " style="left:4102px;top:1644.0px;font-size:42px;line-height:42px;color:#333;"><span style="display:inline-block;transform:scaleX(1.700);transform-origin:0 50%">-</span></div>
<div class="b " style="left:1890px;top:1743px;width:2358px;height:3px;background:#e8e9ed"></div>
<div class="t " style="left:1928px;top:1812.0px;font-size:42px;line-height:42px;color:#333;letter-spacing:2.100px">2025-09-20 10:45:27</div>
<div class="t " style="left:2433px;top:1812.0px;font-size:42px;line-height:42px;color:#333;letter-spacing:2.050px">C2023-09200001</div>
<div class="t " style="left:2863px;top:1814.0px;font-size:42px;line-height:42px;color:#333;">大埃堂美容养生会馆</div>
<div class="t " style="left:3317px;top:1814.0px;font-size:42px;line-height:42px;color:#333;">充值欠款</div>
<div class="t " style="left:3592px;top:1812.0px;font-size:42px;line-height:42px;color:#333;letter-spacing:.6px">500</div>
<div class="t " style="left:3826px;top:1812.0px;font-size:42px;line-height:42px;color:#333;letter-spacing:.6px">500</div>
<div class="t " style="left:4102px;top:1812.0px;font-size:42px;line-height:42px;color:#333;"><span style="display:inline-block;transform:scaleX(1.700);transform-origin:0 50%">-</span></div>
<div class="b " style="left:1890px;top:1911px;width:2358px;height:3px;background:#e8e9ed"></div>
<div class="t " style="left:1928px;top:1980.0px;font-size:42px;line-height:42px;color:#333;letter-spacing:2.100px">2025-09-20 10:45:27</div>
<div class="t " style="left:2433px;top:1980.0px;font-size:42px;line-height:42px;color:#333;letter-spacing:2.050px">C2023-09200001</div>
<div class="t " style="left:2863px;top:1982.0px;font-size:42px;line-height:42px;color:#333;">大埃堂美容养生会馆</div>
<div class="t " style="left:3317px;top:1982.0px;font-size:42px;line-height:42px;color:#333;">还欠款</div>
<div class="t " style="left:3592px;top:1980.0px;font-size:42px;line-height:42px;color:#333;letter-spacing:3px">-1000</div>
<div class="t " style="left:3826px;top:1980.0px;font-size:42px;line-height:42px;color:#333;letter-spacing:.6px">1000</div>
<div class="t " style="left:4102px;top:1980.0px;font-size:42px;line-height:42px;color:#333;"><span style="display:inline-block;transform:scaleX(1.700);transform-origin:0 50%">-</span></div>
<div class="b " style="left:1890px;top:2079px;width:2358px;height:3px;background:#e8e9ed"></div>
<div class="t " style="left:1928px;top:2148.0px;font-size:42px;line-height:42px;color:#333;letter-spacing:2.100px">2025-09-20 10:45:27</div>
<div class="t " style="left:2433px;top:2148.0px;font-size:42px;line-height:42px;color:#333;letter-spacing:2.050px">C2023-09200001</div>
<div class="t " style="left:2863px;top:2150.0px;font-size:42px;line-height:42px;color:#333;">大埃堂美容养生会馆</div>
<div class="t " style="left:3317px;top:2150.0px;font-size:42px;line-height:42px;color:#333;">消费欠款</div>
<div class="t " style="left:3592px;top:2148.0px;font-size:42px;line-height:42px;color:#333;letter-spacing:.6px">1000</div>
<div class="t " style="left:3826px;top:2148.0px;font-size:42px;line-height:42px;color:#333;letter-spacing:.6px">1000</div>
<div class="t " style="left:4102px;top:2148.0px;font-size:42px;line-height:42px;color:#333;"><span style="display:inline-block;transform:scaleX(1.700);transform-origin:0 50%">-</span></div>
<div class="b " style="left:1890px;top:2247px;width:2358px;height:3px;background:#e8e9ed"></div>
</div>
<script>(function(){var w=window.innerWidth;if(w&&Math.abs(w-4320)>2){document.getElementById("app").style.zoom=w/4320;}})();</script>
</body></html>
